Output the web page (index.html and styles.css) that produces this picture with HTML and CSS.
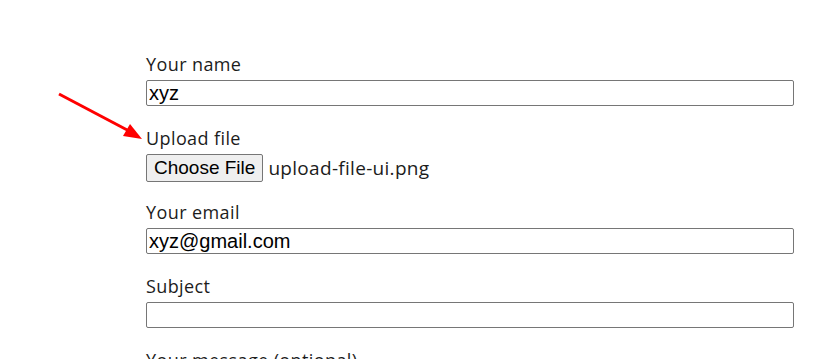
FILE: index.html
```html
<!DOCTYPE html>
<html lang="en">
<head>
    <meta charset="UTF-8">
    <meta name="viewport" content="width=device-width, initial-scale=1.0">
    <title>Contact Form</title>
    <link rel="stylesheet" href="styles.css">
</head>
<body>
    <div class="page">
        <form class="contact-form">
            <div class="field">
                <label for="name">Your name</label>
                <input type="text" id="name" value="xyz">
            </div>

            <div class="field field-file">
                <label>Upload file</label>
                <div class="file-row">
                    <button type="button" class="file-btn">Choose File</button>
                    <span class="file-name">upload-file-ui.png</span>
                </div>
            </div>

            <div class="field">
                <label for="email">Your email</label>
                <input type="text" id="email" value="xyz@gmail.com">
            </div>

            <div class="field">
                <label for="subject">Subject</label>
                <input type="text" id="subject">
            </div>

            <div class="field">
                <label for="msg">Your message (optional)</label>
            </div>
        </form>

        <!-- annotation arrow -->
        <svg class="arrow" width="100" height="60" viewBox="0 0 100 60">
            <line x1="2" y1="2" x2="74" y2="40" stroke="#ff0000" stroke-width="3"/>
            <polygon points="85,47 66,44 73,32" fill="#ff0000"/>
        </svg>
    </div>
</body>
</html>
```

FILE: styles.css
```css
body {
    margin: 0;
    background: white;
    font-family: 'Open Sans', sans-serif;
    color: #1c1c1c;
}
.page { position: relative; height: 359px; overflow: hidden; }
.contact-form { width: 648px; padding: 52px 0 0 146px; }
.field { margin-bottom: 20px; }
.field-file { margin-bottom: 18px; }
label { display: block; font-size: 18px; letter-spacing: 0.4px; line-height: 24px; margin-bottom: 4px; }
input {
    display: block; width: 100%; height: 26px; box-sizing: border-box;
    margin: 0; padding: 0 2px; border: 1px solid #767676; border-radius: 2px;
    font-family: 'Liberation Sans', Arial, sans-serif; font-size: 20px; color: #000;
}
.file-row { display: flex; align-items: center; gap: 5px; height: 28px; }
.file-btn {
    height: 28px; padding: 0 7px; margin: 0;
    background: #efefef; border: 1px solid #767676; border-radius: 2px;
    font-family: 'Liberation Sans', Arial, sans-serif; font-size: 19px; color: #000;
}
.file-name { font-size: 19px; letter-spacing: 0.3px; }
.arrow { position: absolute; left: 57px; top: 92px; }
```
